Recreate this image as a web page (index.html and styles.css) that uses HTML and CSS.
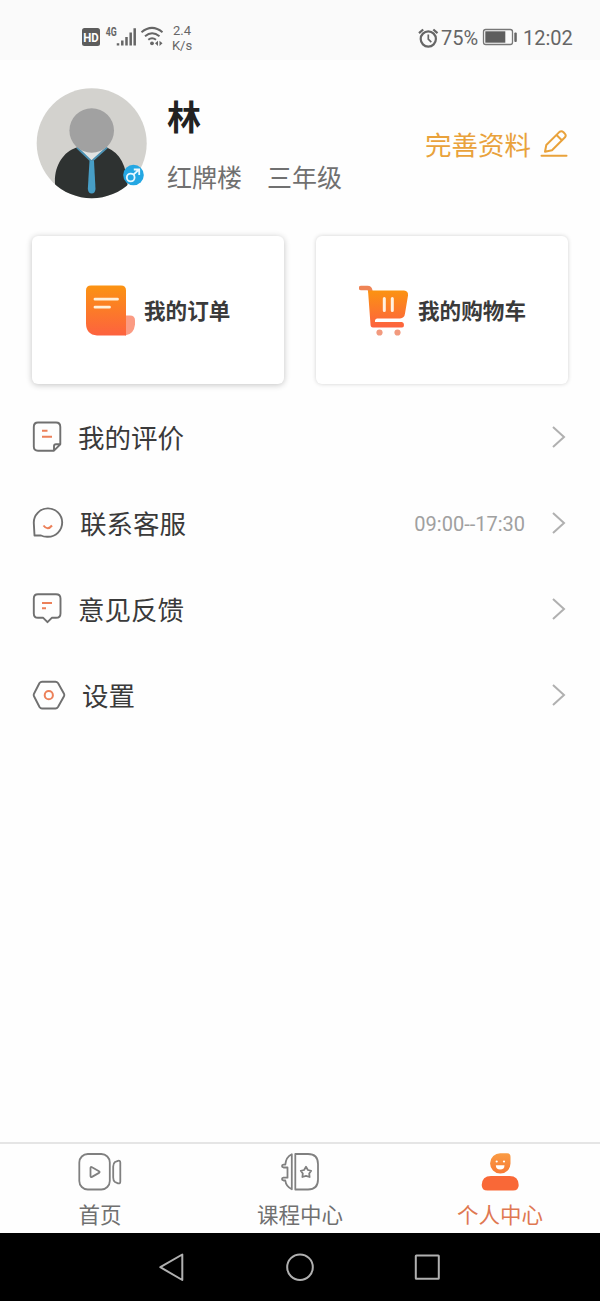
FILE: index.html
```html
<!DOCTYPE html>
<html lang="zh-CN">
<head>
<meta charset="utf-8">
<title>个人中心</title>
<link rel="stylesheet" href="styles.css">
</head>
<body>
<div class="app">
  <header class="status">
    <svg class="status-icons" width="84" height="24" viewBox="81 25 84 24">
      <rect x="82" y="28" width="18" height="18" rx="2.5" fill="#5c5c5c"/>
      <text x="83.300" y="41.500" class="hd" textLength="15.500" lengthAdjust="spacingAndGlyphs">HD</text>
      <text x="105.700" y="35.700" class="g4" textLength="11" lengthAdjust="spacingAndGlyphs">4G</text>
      <path d="M118 43.200v2.300M122.300 40.500v5M126.500 37v8.500M130.700 32.500v13M134.700 28.300v17.200" stroke="#666" stroke-width="2.500" fill="none"/>
      <g stroke="#666" fill="none" stroke-width="2">
        <path d="M141.500 32.200Q152 23.500 162.500 32.200M145 36.200Q152 30.300 159.500 36.200M148.300 39.800Q152 36.800 156 39.800"/>
      </g>
      <circle cx="152" cy="43.300" r="1.900" fill="#666"/>
      <path d="M155 43.300l3-2.600v5.200zM162.500 43.300l-3-2.600v5.200z" fill="#666"/>
    </svg>
    <div class="speed"><span>2.4</span><span>K/s</span></div>
    <svg class="alarm" width="22" height="22" viewBox="417 26 22 22" fill="none" stroke="#666">
      <circle cx="428.300" cy="38" r="7.600" stroke-width="2.200"/>
      <path d="M428.300 33.500v4.700l3 3" stroke-width="1.700"/>
      <path d="M419 32.200l4.200-3.700M437.500 32.200l-4.200-3.700" stroke-width="2.200"/>
    </svg>
    <span class="percent">75%</span>
    <svg class="battery" width="36" height="18" viewBox="482 28 36 18">
      <rect x="483.500" y="29.500" width="29" height="15" rx="2.200" fill="none" stroke="#777" stroke-width="1.300"/>
      <rect x="485.300" y="31.300" width="20" height="11.400" fill="#5e5e5e"/>
      <rect x="514.300" y="32.500" width="2.500" height="9.500" rx="1" fill="#666"/>
    </svg>
    <span class="clock">12:02</span>
  </header>

  <section class="profile">
    <svg class="avatar" width="112" height="112" viewBox="36 87 112 112">
      <defs><clipPath id="face"><circle cx="91.700" cy="143.300" r="55"/></clipPath></defs>
      <circle cx="91.700" cy="143.300" r="55" fill="#d3d2ce"/>
      <g clip-path="url(#face)">
        <path d="M55 184C54 166 63 152 76.500 147.500L91.700 160.500L107 147.500C120 153 127 166 127.500 186V200H55Z" fill="#2e3231"/>
        <path d="M78 148L91.700 162L106 148Z" fill="#e1e3e2"/>
        <path d="M77 147.500L91.500 161.500L107 147.500" fill="none" stroke="#4c91b2" stroke-width="2"/>
        <path d="M89.500 161H94L95.500 189Q95 193.500 91.700 193.500T87.800 189Z" fill="#479ec6"/>
      </g>
      <circle cx="91.700" cy="130.500" r="22.300" fill="#a1a1a1"/>
      <circle cx="133.500" cy="175" r="10.300" fill="#24a7e3"/>
      <g fill="none" stroke="#e8f8ff" stroke-width="1.800"><circle cx="130.700" cy="177.500" r="3.900"/><path d="M133.500 174.700L139 169.500M133.800 169.500H139.200V175"/></g>
    </svg>
    <div class="identity">
      <h1 class="name">林</h1>
      <div class="meta"><span>红牌楼</span><span>三年级</span></div>
    </div>
    <a class="edit"><span>完善资料</span>
      <svg width="28" height="28" viewBox="540 130 28 28" fill="none" stroke="#e9a23b" stroke-width="2" stroke-linejoin="round" stroke-linecap="round"><path d="M545 151.800L546.300 145L559.500 131.900Q561.500 130.500 563.500 132.200L564.800 133.600Q566.500 135.500 565 137.300L552 150.300ZM556.800 135.200L561.800 140.200"/><path d="M541.500 155.700H566.500"/></svg>
    </a>
  </section>

  <section class="cards">
    <div class="card card-raised">
      <svg width="50" height="51" viewBox="85 284.500 50 51">
        <defs><linearGradient id="warm" x1="0" y1="0" x2="0" y2="1"><stop offset="0" stop-color="#fb9312"/><stop offset="1" stop-color="#fd623f"/></linearGradient></defs>
        <path d="M125.500 315H130Q135 315 135 320V324Q134 334 125 335Z" fill="#fb9b83"/>
        <path d="M91 285H121Q126 285 126 290V335H97Q86 334 86 323V290Q86 285 91 285Z" fill="url(#warm)"/>
        <path d="M95 298.700H117.500M95 306.700H109.500" stroke="#fff0d9" stroke-width="2.800" stroke-linecap="round"/>
      </svg>
      <span>我的订单</span>
    </div>
    <div class="card card-cart">
      <svg width="50" height="51" viewBox="359 284.500 50 51">
        <path d="M361 287.500H367.500Q370 287.500 370.500 291" fill="none" stroke="#ef8456" stroke-width="4.500" stroke-linecap="round"/>
        <path d="M368 290H404Q408.500 290.500 408 295L405 313Q404.500 317.500 400 318H377Q374.500 318.500 375 321.500H402Q404 322 404 324.500T402 327H373Q370.500 327 370.500 324Z" fill="url(#warm)"/>
        <path d="M384.300 298V310M392.300 298V310" stroke="#fff0e0" stroke-width="3" stroke-linecap="round"/>
        <circle cx="379.500" cy="332" r="3.100" fill="#f29a7e"/><circle cx="397.500" cy="332" r="3.100" fill="#f29a7e"/>
      </svg>
      <span>我的购物车</span>
    </div>
  </section>

  <nav class="menu">
    <a class="row">
      <svg class="glyph" width="34" height="34" viewBox="32 420 34 34"><path d="M38 422.500H56Q60.300 422.500 60.300 427V444.300L54 450.700H38Q33.800 450.700 33.800 446.500V427Q33.800 422.500 38 422.500ZM60.300 444.300H56Q54 444.300 54 446.300V450.700"/><path class="accent" d="M42 430.700H47.500M42 436.700H52"/></svg>
      <span class="label">我的评价</span>
      <svg class="chevron" width="14" height="24" viewBox="0 0 14 24"><path d="M1 2L12 12L1 22"/></svg>
    </a>
    <a class="row">
      <svg class="glyph" width="34" height="34" viewBox="32.500 506 34 34"><path d="M35 535.500L34.300 523A14.200 14.200 0 1 1 48.500 536.800Q44.500 537 41.500 535.500H35Z"/><path class="accent" d="M44 525.500Q48 531 52.500 525.500"/></svg>
      <span class="label label-contact">联系客服</span>
      <span class="hours">09:00--17:30</span>
      <svg class="chevron" width="14" height="24" viewBox="0 0 14 24"><path d="M1 2L12 12L1 22"/></svg>
    </a>
    <a class="row">
      <svg class="glyph" width="34" height="34" viewBox="32 592 34 34"><path d="M38 594.300H56Q60.500 594.300 60.500 598.500V613.500Q60.500 617.800 56 617.800H51.800L47.500 622.200L43.200 617.800H38Q33.800 617.800 33.800 613.500V598.500Q33.800 594.300 38 594.300Z"/><path class="accent" d="M42 603H52M42 608.200H46"/></svg>
      <span class="label">意见反馈</span>
      <svg class="chevron" width="14" height="24" viewBox="0 0 14 24"><path d="M1 2L12 12L1 22"/></svg>
    </a>
    <a class="row">
      <svg class="glyph" width="34" height="34" viewBox="32 678 34 34"><path d="M42 681.700H55.500Q57 681.700 58 683L64 693.700Q64.700 695 64 696.300L58 707Q57 708.500 55.500 708.500H42Q40.500 708.500 39.500 707L34 696.300Q33.300 695 34 693.700L39.500 683Q40.500 681.700 42 681.700Z"/><circle class="accent" cx="48.800" cy="695.200" r="4.100"/></svg>
      <span class="label label-settings">设置</span>
      <svg class="chevron" width="14" height="24" viewBox="0 0 14 24"><path d="M1 2L12 12L1 22"/></svg>
    </a>
  </nav>

  <nav class="tabs">
    <a class="tab">
      <svg width="44" height="40" viewBox="78 1152 44 40"><rect x="79.300" y="1154" width="30.500" height="35.500" rx="8.500"/><path d="M90.500 1168Q90.500 1166.500 92 1167.200L99 1171.200Q100.300 1172 99 1172.900L92 1176.900Q90.500 1177.500 90.500 1176ZM113.200 1166.500Q113.200 1163.500 115 1162L118 1160.800Q120.300 1160.300 120.300 1162.500V1181.500Q120.300 1184 118 1183.300L115 1182Q113.200 1180.700 113.200 1177.500Z"/></svg>
      <span>首页</span>
    </a>
    <a class="tab">
      <svg width="44" height="40" viewBox="278 1152 44 40"><path d="M295.300 1154H308Q318 1154 318 1164V1179.500Q318 1189.500 308 1189.500H295.300ZM291.800 1154.300V1189.300Q286 1186.500 285.300 1180.500H283.500Q282 1180 282 1179T283.500 1177.700H287.500V1167.500H283.500Q282 1167 282 1166T283.500 1164.600H285.300Q286 1157 291.800 1154.300ZM306 1166.800L307.900 1170L311.200 1170.800L309.200 1173.500L309.600 1177L306 1175.900L302.400 1177L302.800 1173.500L300.800 1170.800L304.100 1170Z"/></svg>
      <span>课程中心</span>
    </a>
    <a class="tab tab-active">
      <svg width="44" height="40" viewBox="478 1152 44 40"><defs><linearGradient id="head" x1="0" y1="0" x2="0" y2="1"><stop offset="0" stop-color="#fa9c44"/><stop offset="1" stop-color="#f77a35"/></linearGradient></defs><path d="M500.500 1153.200H507Q510.500 1153.200 510.500 1157V1163.500A10.200 10.200 0 1 1 500.500 1153.200Z" fill="url(#head)" stroke="none"/><path d="M495.800 1165.300H504.500Q504.500 1169.600 500.200 1169.600T495.800 1165.300Z" fill="#fff" stroke="none"/><circle cx="496.700" cy="1161.500" r="1.100" fill="#fff" stroke="none"/><circle cx="504" cy="1161.500" r="1.100" fill="#fff" stroke="none"/><path d="M491 1176H509.500Q518.500 1176 518.700 1185Q518.700 1190.500 513 1190.500H487.500Q481.700 1190.500 481.700 1185Q482 1176 491 1176Z" fill="#f96837" stroke="none"/></svg>
      <span>个人中心</span>
    </a>
  </nav>

  <footer class="system">
    <svg width="28" height="30" viewBox="158 1252 28 30"><path d="M182.300 1254.500V1280L160.300 1267.200Z"/></svg>
    <svg width="30" height="30" viewBox="285 1252 30 30"><circle cx="300" cy="1267.200" r="12.800"/></svg>
    <svg width="28" height="30" viewBox="413 1252 28 30"><rect x="415.800" y="1255.500" width="23" height="23.300" rx=".5"/></svg>
  </footer>
</div>
</body>
</html>
```
FILE: styles.css
```css
* { box-sizing: border-box; }
body { margin: 0; background: #fefefe; font-family: Roboto, "Noto Sans CJK SC", sans-serif; }
svg { display: block; flex: none; }
.app { width: 600px; height: 1301px; display: flex; flex-direction: column; overflow: hidden; }

.status { height: 60px; flex: none; background: #fafafa; display: flex; align-items: center; padding: 15px 28px 0 81px; color: #666; font-size: 20px; }
.status-icons { margin-top: -1px; }
.hd { font: bold 12px Roboto, sans-serif; fill: #fff; }
.g4 { font: bold 12px Roboto, sans-serif; fill: #666; }
.speed { display: flex; flex-direction: column; width: 22px; margin-left: 6px; font-size: 13px; line-height: 15px; align-items: center; }
.alarm { margin-left: auto; }
.percent { margin-left: 2px; width: 41px; }
.battery { margin-top: -1px; }
.clock { margin-left: 5px; width: 49px; white-space: nowrap; }

.profile { height: 176px; flex: none; display: flex; padding: 27px 32px 0 36px; }
.identity { padding-left: 19px; }
.name { margin: 11px 0 0; font-size: 34px; line-height: 40px; font-weight: 700; color: #222; }
.meta { margin-top: 23px; display: flex; gap: 25px; font-size: 25px; line-height: 36px; color: #707070; }
.edit { display: flex; gap: 9px; height: 36px; margin: 41px 0 0 auto; color: #e9a23b; font-size: 26.500px; line-height: 36px; white-space: nowrap; }
.edit svg { margin-top: 2px; }

.cards { display: flex; gap: 32px; padding: 0 32px; flex: none; }
.card { width: 252px; flex: none; height: 148px; border-radius: 6px; background: #fff; display: flex; align-items: center; gap: 9px; padding-left: 53px; color: #3a3a3a; font-size: 21.600px; font-weight: 700; line-height: 30px; box-shadow: 0 0 4px rgba(0,0,0,.18); white-space: nowrap; }
.card span { padding-top: 3px; }
.card-raised { box-shadow: 0 1px 6px rgba(0,0,0,.24); }
.card-cart { padding-left: 43px; }

.menu { padding: 10px 34px 0 32px; }
.row { height: 86px; display: flex; align-items: center; }
.label { margin-left: 12px; padding-top: 4px; font-size: 26.500px; line-height: 38px; color: #3a3a3a; }
.label-contact { margin-left: 14px; }
.label-settings { margin-left: 16px; }
.glyph { fill: none; stroke: #707070; stroke-width: 1.900; stroke-linejoin: round; }
.glyph .accent { stroke: #ec8059; stroke-width: 2; }
.chevron { margin-left: auto; fill: none; stroke: #b0b0b0; stroke-width: 2; }
.hours { margin-left: auto; padding-top: 2px; font-size: 20px; color: #a0a0a0; }
.hours + .chevron { margin-left: 27px; }

.tabs { margin-top: auto; height: 91px; flex: none; display: flex; border-top: 2px solid #e5e5e5; }
.tab { flex: 1; display: flex; flex-direction: column; align-items: center; padding-top: 8px; color: #707070; font-size: 21.500px; line-height: 30px; }
.tab svg { fill: none; stroke: #808080; stroke-width: 1.800; stroke-linejoin: round; }
.tab span { margin-top: 9px; }
.tab-active { color: #df7852; }

.system { height: 68px; flex: none; background: #000; display: flex; justify-content: space-between; padding: 19px 159px 0 158px; }
.system svg { fill: none; stroke: #b0b0b0; stroke-width: 2; stroke-linejoin: round; }
```
